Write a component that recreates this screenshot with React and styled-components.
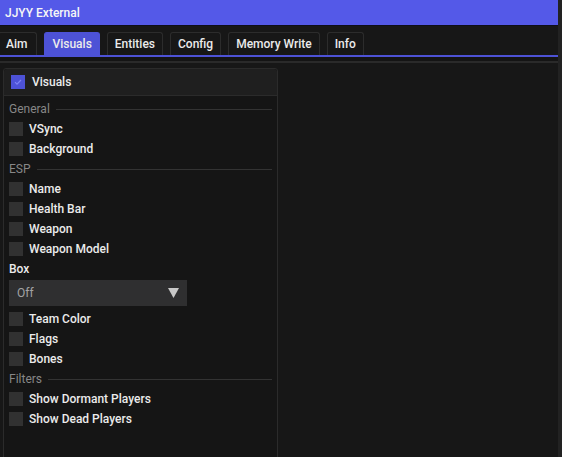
import React from 'react';
import styled, { createGlobalStyle } from 'styled-components';

const GlobalStyle = createGlobalStyle`
  html, body {
    margin: 0;
    padding: 0;
    background: #161616;
    overflow: hidden;
  }
  * { box-sizing: border-box; }
`;

const Window = styled.div`
  width: 562px;
  height: 457px;
  display: flex;
  flex-direction: column;
  background: #171717;
  font-family: 'Roboto', 'Liberation Sans', sans-serif;
  font-size: 12px;
  font-weight: 500;
  color: #ebebeb;
  border-right: 4px solid #222;
  overflow: hidden;
`;

const TitleBar = styled.div`
  height: 26px;
  flex-shrink: 0;
  background: #5459e8;
  border-bottom: 1px solid #0e0e1a;
  display: flex;
  align-items: center;
  padding-left: 5px;
  color: #f6f6f6;
`;

const TabBar = styled.div`
  display: flex;
  align-items: flex-end;
  gap: 7px;
  height: 31px;
  flex-shrink: 0;
  border-bottom: 2px solid #4d52d6;
`;

const Tab = styled.div`
  height: 23px;
  padding: 0 7px;
  display: flex;
  align-items: center;
  border: 1px solid ${p => (p.active ? '#4d52d6' : '#2c2c2c')};
  border-bottom: none;
  border-radius: 3px 3px 0 0;
  background: ${p => (p.active ? '#4d52d6' : '#171717')};

  &:first-child {
    margin-left: -2px;
    padding-right: 9px;
  }
`;

const Divider = styled.div`
  height: 6px;
  flex-shrink: 0;
  border-top: 4px solid #141414;
  border-bottom: 2px solid #2a2a2a;
`;

const Body = styled.div`
  flex: 1;
  padding: 5px 3px 0 3px;
  display: flex;
`;

const Child = styled.div`
  width: 275px;
  height: 400px;
  border: 1px solid #2b2b2b;
  border-radius: 3px 3px 0 0;
  background: #151515;
  display: flex;
  flex-direction: column;
`;

const ChildHeader = styled.div`
  height: 27px;
  display: flex;
  align-items: center;
  gap: 7px;
  padding-left: 7px;
  background: #1f1f1f;
  border-bottom: 1px solid #2b2b2b;
  border-radius: 3px 3px 0 0;
`;

const ChildContent = styled.div`
  display: flex;
  flex-direction: column;
  padding: 3px 5px 0 5px;
`;

const Section = styled.div`
  height: 20px;
  display: flex;
  align-items: center;
  gap: 6px;
  color: #878787;
  font-weight: 400;

  &::after {
    content: '';
    flex: 1;
    height: 1px;
    background: #333;
  }
`;

const Label = styled.div`
  height: 20px;
  display: flex;
  align-items: center;
`;

const Row = styled.label`
  height: 20px;
  display: flex;
  align-items: center;
  gap: 6px;
`;

const Box = styled.span`
  width: 14px;
  height: 14px;
  flex-shrink: 0;
  background: ${p => (p.checked ? '#4d52d6' : '#313131')};
  display: flex;
  align-items: center;
  justify-content: center;
`;

const Combo = styled.div`
  width: 178px;
  height: 26px;
  margin: 1px 0 3px;
  background: #2f2f30;
  display: flex;
  align-items: center;
  justify-content: space-between;
  padding: 0 8px;
  color: #a3a3a3;
  font-weight: 400;
`;

const Check = ({ checked }) => (
  <Box checked={checked}>
    {checked && (
      <svg width="10" height="10" viewBox="0 0 10 10">
        <path d="M2 5.2 L4 7.2 L8 3" fill="none" stroke="#7d82f2" strokeWidth="1.2" />
      </svg>
    )}
  </Box>
);

const Option = ({ children }) => (
  <Row>
    <Check />
    {children}
  </Row>
);

const tabs = ['Aim', 'Visuals', 'Entities', 'Config', 'Memory Write', 'Info'];

export default function App() {
  return (
    <>
      <GlobalStyle />
      <Window>
        <TitleBar>JJYY External</TitleBar>
        <TabBar>
          {tabs.map(t => (
            <Tab key={t} active={t === 'Visuals'}>{t}</Tab>
          ))}
        </TabBar>
        <Divider />
        <Body>
          <Child>
            <ChildHeader>
              <Check checked />
              Visuals
            </ChildHeader>
            <ChildContent>
              <Section>General</Section>
              <Option>VSync</Option>
              <Option>Background</Option>
              <Section>ESP</Section>
              <Option>Name</Option>
              <Option>Health Bar</Option>
              <Option>Weapon</Option>
              <Option>Weapon Model</Option>
              <Label>Box</Label>
              <Combo>
                Off
                <svg width="11" height="10" viewBox="0 0 11 10">
                  <path d="M0 0 H11 L5.5 10 Z" fill="#c8c8c8" />
                </svg>
              </Combo>
              <Option>Team Color</Option>
              <Option>Flags</Option>
              <Option>Bones</Option>
              <Section>Filters</Section>
              <Option>Show Dormant Players</Option>
              <Option>Show Dead Players</Option>
            </ChildContent>
          </Child>
        </Body>
      </Window>
    </>
  );
}
